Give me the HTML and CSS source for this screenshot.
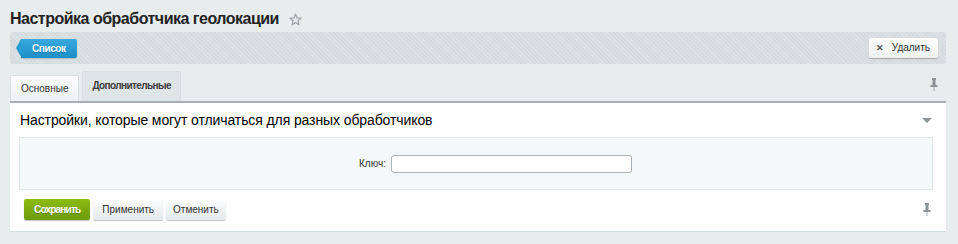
FILE: index.html
```html
<!DOCTYPE html>
<html>
<head>
  <meta charset="UTF-8">
  <title>Настройка обработчика геолокации</title>
  <link rel="stylesheet" href="styles.css">
</head>
<body>
  <div class="title-row">
    <h1>Настройка обработчика геолокации</h1>
    <svg class="star" width="13" height="13" viewBox="0 0 13 13">
      <path d="M6.5 1 L8 5 L12 5.2 L8.9 7.7 L10 11.8 L6.5 9.4 L3 11.8 L4.1 7.7 L1 5.2 L5 5 Z" fill="none" stroke="#9aa3a8" stroke-width="1.2" stroke-linejoin="round"/>
    </svg>
  </div>

  <div class="toolbar">
    <a class="btn-back">Список</a>
    <a class="btn-delete"><span class="x">✕</span>Удалить</a>
  </div>

  <div class="tabs-row">
    <div class="tab">Основные</div>
    <div class="tab active">Дополнительные</div>
    <svg class="pin pin-top" width="8" height="13" viewBox="0 0 8 13">
      <rect x="2" y="0" width="4" height="2" fill="#8b9397"/>
      <rect x="2.5" y="2" width="3" height="5" fill="#8b9397"/>
      <rect x="0.5" y="7" width="7" height="2" fill="#8b9397"/>
      <rect x="3.5" y="9" width="1" height="4" fill="#a5acb0"/>
    </svg>
  </div>

  <div class="panel">
    <div class="panel-head">
      <span>Настройки, которые могут отличаться для разных обработчиков</span>
      <span class="arrow"></span>
    </div>
    <div class="fields">
      <label for="key">Ключ:</label>
      <input type="text" id="key">
    </div>
    <div class="buttons">
      <button class="save">Сохранить</button>
      <button>Применить</button>
      <button class="cancel">Отменить</button>
      <svg class="pin" width="8" height="13" viewBox="0 0 8 13">
        <rect x="2" y="0" width="4" height="2" fill="#8b9397"/>
        <rect x="2.5" y="2" width="3" height="5" fill="#8b9397"/>
        <rect x="0.5" y="7" width="7" height="2" fill="#8b9397"/>
        <rect x="3.5" y="9" width="1" height="4" fill="#a5acb0"/>
      </svg>
    </div>
  </div>
</body>
</html>
```

FILE: styles.css
```css
body {
  margin: 0;
  padding: 0 12px 0 10px;
  background-color: #e7eced;
  font-family: "Liberation Sans", Arial, sans-serif;
  color: #333;
}
.title-row {
  display: flex;
  align-items: center;
  height: 27px;
  padding-top: 5px;
}
h1 {
  margin: 0;
  font-size: 16px;
  letter-spacing: -0.5px;
  font-weight: bold;
  color: #222;
}
.star {
  margin-left: 10px;
  margin-top: 1px;
}
.toolbar {
  height: 32px;
  display: flex;
  align-items: center;
  justify-content: space-between;
  padding: 0 8px 0 6px;
  border-radius: 3px;
  background-color: #d5dcdf;
  background-image: repeating-linear-gradient(45deg, rgba(255,255,255,0.18) 0 1px, transparent 1px 3px);
}
.btn-back {
  position: relative;
  margin-left: 5px;
  height: 19px;
  line-height: 19px;
  padding: 0 11px 0 11px;
  font-size: 10px;
  letter-spacing: -0.4px;
  font-weight: bold;
  color: #fff;
  background: linear-gradient(#38a9de, #1b8fc9);
  border-radius: 0 2px 2px 0;
  text-shadow: 0 1px 0 rgba(0,0,0,0.2);
  box-shadow: 0 1px 1px rgba(0,0,0,0.15);
}
.btn-back:before {
  content: "";
  position: absolute;
  left: -5px;
  top: 0;
  width: 0;
  height: 0;
  border-top: 9.5px solid transparent;
  border-bottom: 9.5px solid transparent;
  border-right: 5px solid #2a9dd4;
}
.btn-delete {
  height: 20px;
  line-height: 20px;
  padding: 0 8px 0 7px;
  font-size: 10px;
  color: #333;
  background: linear-gradient(#fdfefe, #eef1f2);
  border-radius: 2px;
  box-shadow: 0 1px 1px rgba(0,0,0,0.25);
}
.btn-delete .x {
  font-weight: bold;
  font-size: 9px;
  margin-right: 8px;
  color: #555;
}
.tabs-row {
  display: flex;
  align-items: flex-end;
  height: 37px;
  position: relative;
}
.tab {
  height: 25px;
  line-height: 25px;
  padding: 0 10px;
  margin-right: 3px;
  font-size: 10px;
  color: #333;
  background: linear-gradient(#fbfcfc, #eef2f3);
  border: 1px solid #d7dfe1;
  border-bottom: none;
  border-radius: 2px 2px 0 0;
}
.tab.active {
  height: 29px;
  line-height: 28px;
  padding: 0 9px;
  background: #dee5e7;
  font-weight: bold;
  letter-spacing: -0.6px;
  color: #3b3b3b;
}
.pin-top {
  position: absolute;
  right: 8px;
  top: 14px;
}
.panel {
  background: #fff;
  border-top: 2px solid #a6afb2;
  border-bottom: 1px solid #d5dde0;
  padding: 0 13px 11px 9px;
}
.panel-head {
  display: flex;
  justify-content: space-between;
  align-items: center;
  height: 34px;
  padding-left: 1px;
  font-size: 14px;
  letter-spacing: -0.1px;
  color: #000;
}
.arrow {
  width: 0;
  height: 0;
  margin-right: 1px;
  border-left: 5px solid transparent;
  border-right: 5px solid transparent;
  border-top: 5px solid #8e9599;
}
.fields {
  height: 51px;
  display: flex;
  align-items: center;
  background: #f5f8f9;
  border: 1px solid #dfe7e9;
  padding-left: 339px;
}
.fields label {
  font-size: 10px;
  color: #333;
  margin-right: 5px;
}
.fields input {
  width: 233px;
  height: 14px;
  border: 1px solid #a9b3b8;
  border-radius: 3px;
  padding: 1px 3px;
}
.buttons {
  display: flex;
  align-items: center;
  margin-top: 9px;
  padding-left: 5px;
}
.buttons button {
  height: 21px;
  padding: 0 9px;
  margin-right: 3px;
  font-family: "Liberation Sans", Arial, sans-serif;
  font-size: 10px;
  color: #333;
  border: none;
  border-radius: 2px;
  background: linear-gradient(#fdfefe, #e3e8ea);
  box-shadow: 0 1px 1px rgba(0,0,0,0.25);
}
.buttons button.cancel {
  padding: 0 7px;
}
.buttons button.save {
  padding: 0 10px;
  font-weight: bold;
  letter-spacing: -0.8px;
  color: #fff;
  background: linear-gradient(#8dbb12, #6c9a0b);
  text-shadow: 0 1px 0 rgba(0,0,0,0.2);
}
.buttons .pin {
  margin-left: auto;
  margin-right: 2px;
}
```
